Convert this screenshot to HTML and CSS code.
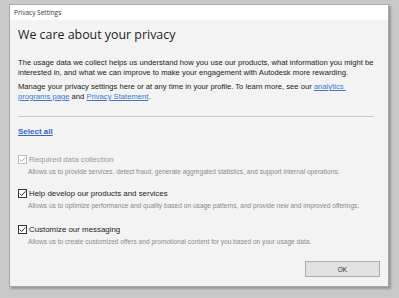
FILE: index.html
```html
<!DOCTYPE html>
<html>
<head>
<meta charset="utf-8">
<link rel="stylesheet" href="styles.css">
</head>
<body>
<div class="window">
  <div class="titlebar">Privacy Settings</div>
  <div class="content">
    <h1 class="heading">We care about your privacy</h1>
    <p class="para p1">The usage data we collect helps us understand how you use our products, what information you might be interested in, and what we can improve to make your engagement with Autodesk more rewarding.</p>
    <p class="para p2"><span class="line">Manage your privacy settings here or at any time in your profile. To learn more, see our <a class="link">analytics&nbsp;</a></span><span class="line"><a class="link">programs page</a> and <a class="link">Privacy Statement</a>.</span></p>
    <div class="sep"></div>
    <a class="selectall">Select all</a>
    <div class="option opt1 disabled">
      <div class="row"><span class="cb"><svg width="9" height="9" viewBox="0 0 9 9"><path d="M1.8 4.6 L3.7 6.5 L7.3 2.4" fill="none" stroke="#b0b0b0" stroke-width="1"/></svg></span><span class="label">Required data collection</span></div>
      <div class="desc">Allows us to provide services, detect fraud, generate aggregated statistics, and support internal operations.</div>
    </div>
    <div class="option opt2">
      <div class="row"><span class="cb"><svg width="9" height="9" viewBox="0 0 9 9"><path d="M1.8 4.6 L3.7 6.5 L7.3 2.4" fill="none" stroke="#333" stroke-width="1"/></svg></span><span class="label">Help develop our products and services</span></div>
      <div class="desc">Allows us to optimize performance and quality based on usage patterns, and provide new and improved offerings.</div>
    </div>
    <div class="option opt3">
      <div class="row"><span class="cb"><svg width="9" height="9" viewBox="0 0 9 9"><path d="M1.8 4.6 L3.7 6.5 L7.3 2.4" fill="none" stroke="#333" stroke-width="1"/></svg></span><span class="label">Customize our messaging</span></div>
      <div class="desc">Allows us to create customized offers and promotional content for you based on your usage data.</div>
    </div>
    <div class="footer"><button class="ok">OK</button></div>
  </div>
</div>
</body>
</html>
```
FILE: styles.css
```css
html, body { margin: 0; padding: 0; }
body {
  width: 399px; height: 298px; overflow: hidden;
  background: #c9c9c9;
  font-family: "Liberation Sans", Arial, sans-serif;
}
.window {
  margin: 4px 0 0 9px;
  width: 378px; height: 281px;
  border: 1px solid #a8a8a8;
  background: #f3f3f3;
  box-shadow: 2px 2px 2px rgba(0,0,0,0.25);
  display: flex; flex-direction: column;
}
.titlebar {
  height: 15px; background: #fff;
  font-family: "Open Sans", "Noto Sans", sans-serif;
  font-size: 6.5px; color: #333;
  padding-left: 4px; line-height: 15px;
}
.content { flex: 1; padding: 0 8px 0 8px; display: flex; flex-direction: column; }
.heading {
  margin: 6px 0 0 0;
  font-family: "Open Sans", "Noto Sans", sans-serif;
  font-weight: 400; font-size: 12.4px; color: #1e1e1e;
  line-height: 18px;
}
.para { margin: 0; font-size: 7.65px; line-height: 10px; color: #222; }
.p1 { margin-top: 14px; width: 372px; }
.p2 { margin-top: 4px; }
.line { display: block; white-space: nowrap; }
.link { color: #3c78d8; text-decoration: underline; }
.sep { height: 1px; background: #c8c8c8; margin: 14px 6px 0 0; }
.selectall {
  margin-top: 10px; font-size: 8px; font-weight: bold; color: #2f64d0;
  text-decoration: underline; line-height: 10px; align-self: flex-start;
}
.opt1 { margin-top: 17px; }
.opt2 { margin-top: 12px; }
.opt3 { margin-top: 14px; }
.row { display: flex; align-items: center; height: 10px; }
.cb {
  width: 7px; height: 7px; border: 1px solid #333; background: #fff;
  display: flex; align-items: center; justify-content: center; margin-right: 2px;
}
.cb svg { flex: none; }
.label { font-size: 7.9px; color: #222; }
.disabled .cb { border-color: #bbb; }
.disabled .label { color: #999; }
.desc { font-size: 6.6px; color: #8a8a8a; margin: 4px 0 0 10px; line-height: 8px; }
.footer { display: flex; justify-content: flex-end; margin-top: 15px; }
.ok {
  width: 75px; height: 16px;
  background: #e1e1e1; border: 1px solid #adadad; border-radius: 0;
  font-family: "Liberation Sans", Arial, sans-serif; font-size: 6.5px; color: #333; padding: 0;
}
```
